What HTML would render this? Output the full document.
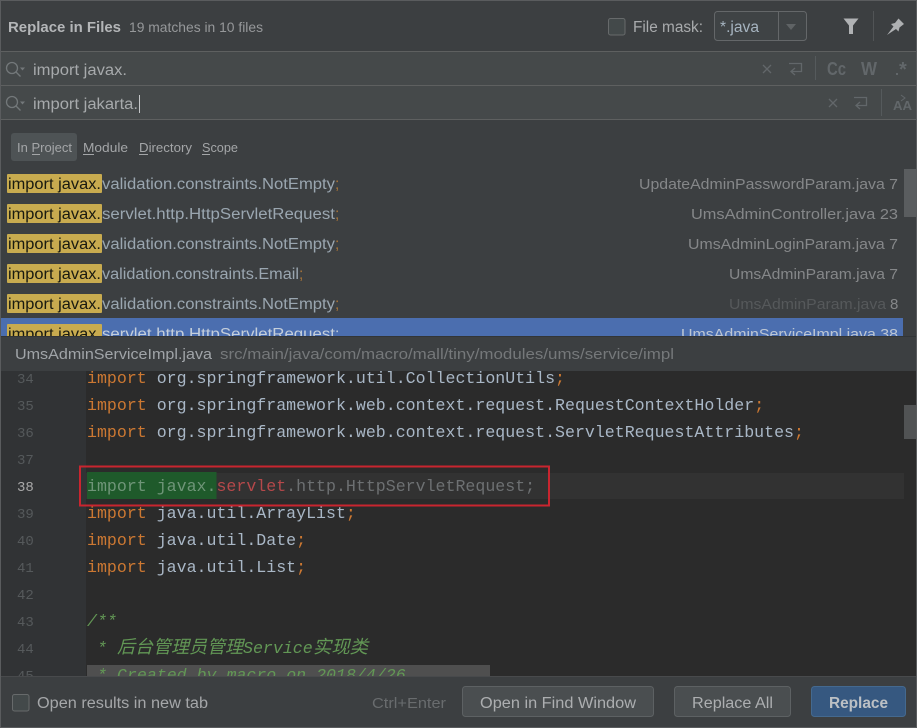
<!DOCTYPE html>
<html><head><meta charset="utf-8"><title>Replace in Files</title>
<style>
html,body{margin:0;padding:0;width:917px;height:728px;overflow:hidden;background:#3c3f41}
svg{display:block}
text{font-family:"Liberation Sans","Noto Sans CJK SC",sans-serif}
.m text{font-family:"Liberation Mono","Noto Sans CJK SC",monospace;font-size:16.6px;white-space:pre}
.n text{font-family:"Liberation Mono",monospace;font-size:14px;fill:#55595b}
.l{font-size:15.5px}
.f{font-size:15px;fill:#858789}
</style></head><body>
<svg width="917" height="728" viewBox="0 0 917 728" xmlns="http://www.w3.org/2000/svg">
<rect width="917" height="728" fill="#3c3f41"/>
<!-- search fields -->
<rect x="0" y="52" width="917" height="67" fill="#45494a"/>
<rect x="0" y="51" width="917" height="1" fill="#5e6060"/>
<rect x="0" y="85" width="917" height="1" fill="#5e6060"/>
<rect x="0" y="119" width="917" height="1" fill="#5e6060"/>
<!-- header -->
<text x="8" y="32" font-size="15" font-weight="bold" fill="#b4b6b8" textLength="113" lengthAdjust="spacingAndGlyphs">Replace in Files</text>
<text x="129" y="32" font-size="14" fill="#96989a" textLength="134" lengthAdjust="spacingAndGlyphs">19 matches in 10 files</text>
<rect x="608.5" y="18.5" width="16.5" height="16.5" rx="2" fill="#43494a" stroke="#676a6b"/>
<text x="633" y="32" font-size="15.5" fill="#a9abad" textLength="70" lengthAdjust="spacingAndGlyphs">File mask:</text>
<rect x="714.5" y="11.5" width="92" height="29" rx="3" fill="#3f4345" stroke="#646769"/>
<rect x="778" y="12" width="1" height="28" fill="#646769"/>
<text x="720" y="32" font-size="15.5" fill="#a6b4c0" textLength="39" lengthAdjust="spacingAndGlyphs">*.java</text>
<path d="M786 24h10l-5 6z" fill="#5f6365"/>
<path d="M843.500 18.500h15l-5.500 7v8.500h-4v-8.500z" fill="#b0b2b4"/>
<rect x="873" y="11" width="1" height="30" fill="#515456"/>
<path d="M887 35l6.500-8.500-2.500-2.500 4-1 3.500-4.500 5.500 5.500-4.500 3.500-1 4-2.500-2.500z" fill="#aeb0b2"/>
<!-- search icons -->
<g fill="none" stroke="#73787a" stroke-width="1.300">
<circle cx="12" cy="68" r="5.500"/><path d="M16 72l4.500 4.500"/>
<circle cx="12" cy="102" r="5.500"/><path d="M16 106l4.500 4.500"/>
</g>
<path d="M20 67.500h5l-2.500 3zM20 101.500h5l-2.500 3z" fill="#73787a"/>
<text x="33" y="75" font-size="15.500" fill="#a7aaac" textLength="94" lengthAdjust="spacingAndGlyphs">import javax.</text>
<text x="33" y="109" font-size="15.500" fill="#a7aaac" textLength="105" lengthAdjust="spacingAndGlyphs">import jakarta.</text>
<rect x="139" y="95" width="1" height="18" fill="#c4c6c8"/>
<!-- right search icons -->
<g fill="none" stroke="#62676a" stroke-width="1.300">
<path d="M763 65l8 8M771 65l-8 8M829 99l8 8M837 99l-8 8"/>
<path d="M789 63.500h12.500v8h-10M795 68l-4 3.500 4 3.500"/>
<path d="M854 97.500h12.500v8h-10M860 102l-4 3.500 4 3.500"/>
</g>
<rect x="815" y="56" width="1" height="24" fill="#555a5c"/>
<rect x="881" y="89" width="1" height="27" fill="#555a5c"/>
<text x="827" y="75" font-size="18" font-weight="bold" fill="#62676a" textLength="19" lengthAdjust="spacingAndGlyphs">Cc</text>
<text x="861" y="75" font-size="18" font-weight="bold" fill="#62676a" textLength="16" lengthAdjust="spacingAndGlyphs">W</text>
<text x="899" y="76" font-size="20" font-weight="bold" fill="#62676a">*</text>
<rect x="896" y="73" width="2" height="2" fill="#62676a"/>
<text x="893" y="110" font-size="13" font-weight="bold" fill="#62676a" textLength="19" lengthAdjust="spacingAndGlyphs">AA</text>
<path d="M901 95l4 3-4 3" fill="none" stroke="#62676a"/>
<!-- scope tabs -->
<rect x="11" y="133" width="66" height="28" rx="3" fill="#4e5355"/>
<g font-size="13" fill="#a4a6a8">
<text x="17" y="152" textLength="55" lengthAdjust="spacingAndGlyphs">In Project</text>
<text x="83" y="152" textLength="45" lengthAdjust="spacingAndGlyphs">Module</text>
<text x="139" y="152" textLength="53" lengthAdjust="spacingAndGlyphs">Directory</text>
<text x="202" y="152" textLength="36" lengthAdjust="spacingAndGlyphs">Scope</text>
</g>
<g fill="#a4a6a8"><rect x="32" y="154" width="8" height="1"/><rect x="83" y="154" width="11" height="1"/><rect x="139" y="154" width="9" height="1"/><rect x="202" y="154" width="8" height="1"/></g>
<!-- results -->
<rect x="0" y="318" width="903" height="19" fill="#4b6eaf"/>
<g fill="#c8ab4f">
<rect x="7" y="174" width="95" height="19" rx="1"/><rect x="7" y="204" width="95" height="19" rx="1"/><rect x="7" y="234" width="95" height="19" rx="1"/><rect x="7" y="264" width="95" height="19" rx="1"/><rect x="7" y="294" width="95" height="19" rx="1"/><rect x="7" y="324" width="95" height="19" rx="1"/>
</g>
<g class="l" fill="#191a10">
<text x="8" y="189" textLength="93" lengthAdjust="spacingAndGlyphs">import javax.</text>
<text x="8" y="219" textLength="93" lengthAdjust="spacingAndGlyphs">import javax.</text>
<text x="8" y="249" textLength="93" lengthAdjust="spacingAndGlyphs">import javax.</text>
<text x="8" y="279" textLength="93" lengthAdjust="spacingAndGlyphs">import javax.</text>
<text x="8" y="309" textLength="93" lengthAdjust="spacingAndGlyphs">import javax.</text>
<text x="8" y="339" textLength="93" lengthAdjust="spacingAndGlyphs">import javax.</text>
</g>
<g class="l" fill="#9aa6b0">
<text x="102" y="189" textLength="233" lengthAdjust="spacingAndGlyphs">validation.constraints.NotEmpty</text>
<text x="102" y="219" textLength="233" lengthAdjust="spacingAndGlyphs">servlet.http.HttpServletRequest</text>
<text x="102" y="249" textLength="233" lengthAdjust="spacingAndGlyphs">validation.constraints.NotEmpty</text>
<text x="102" y="279" textLength="197" lengthAdjust="spacingAndGlyphs">validation.constraints.Email</text>
<text x="102" y="309" textLength="233" lengthAdjust="spacingAndGlyphs">validation.constraints.NotEmpty</text>
<text x="102" y="339" textLength="233" lengthAdjust="spacingAndGlyphs" fill="#c5cfdb">servlet.http.HttpServletRequest</text>
</g>
<g class="l" fill="#a8743a">
<text x="335" y="189">;</text><text x="335" y="219">;</text><text x="335" y="249">;</text><text x="299" y="279">;</text><text x="335" y="309">;</text><text x="335" y="339" fill="#c5cfdb">;</text>
</g>
<g class="f">
<text x="639" y="189" textLength="259" lengthAdjust="spacingAndGlyphs">UpdateAdminPasswordParam.java 7</text>
<text x="691" y="219" textLength="207" lengthAdjust="spacingAndGlyphs">UmsAdminController.java 23</text>
<text x="688" y="249" textLength="210" lengthAdjust="spacingAndGlyphs">UmsAdminLoginParam.java 7</text>
<text x="729" y="279" textLength="169" lengthAdjust="spacingAndGlyphs">UmsAdminParam.java 7</text>
<text x="729" y="309" textLength="157" lengthAdjust="spacingAndGlyphs" fill="#56595b">UmsAdminParam.java</text>
<text x="890" y="309" style="font-size:15px" fill="#858789">8</text>
<text x="681" y="339" textLength="217" lengthAdjust="spacingAndGlyphs" fill="#bcc6d4">UmsAdminServiceImpl.java 38</text>
</g>
<rect x="904" y="169" width="12" height="48" fill="#5a5d5f"/>
<!-- preview header -->
<rect x="0" y="337" width="917" height="34" fill="#3c3f41"/>
<rect x="0" y="336" width="917" height="1" fill="#323537"/>
<text x="15" y="359" font-size="15" fill="#a0a4a8" textLength="197" lengthAdjust="spacingAndGlyphs">UmsAdminServiceImpl.java</text>
<text x="220" y="359" font-size="15" fill="#75787a" textLength="454" lengthAdjust="spacingAndGlyphs">src/main/java/com/macro/mall/tiny/modules/ums/service/impl</text>
<!-- editor -->
<rect x="0" y="371" width="917" height="306" fill="#2b2b2b"/>
<rect x="0" y="371" width="86" height="306" fill="#313335"/>
<rect x="86" y="473" width="818" height="26" fill="#323232"/>
<rect x="87" y="472" width="129.500" height="27" fill="#1f5a2b"/>
<rect x="87" y="665" width="403" height="12" fill="#4f4f4f"/>
<rect x="904" y="405" width="12" height="34" fill="#515354"/>
<g class="n">
<text x="17" y="383">34</text><text x="17" y="410">35</text><text x="17" y="437">36</text><text x="17" y="464">37</text>
<text x="17" y="491" style="fill:#a9a9a9">38</text>
<text x="17" y="518">39</text><text x="17" y="545">40</text><text x="17" y="572">41</text><text x="17" y="599">42</text><text x="17" y="626">43</text><text x="17" y="653">44</text><text x="17" y="680">45</text>
</g>
<g class="m" fill="#a9b7c6">
<text x="87" y="383"><tspan fill="#cc7832">import</tspan> org.springframework.util.CollectionUtils<tspan fill="#cc7832">;</tspan></text>
<text x="87" y="410"><tspan fill="#cc7832">import</tspan> org.springframework.web.context.request.RequestContextHolder<tspan fill="#cc7832">;</tspan></text>
<text x="87" y="437"><tspan fill="#cc7832">import</tspan> org.springframework.web.context.request.ServletRequestAttributes<tspan fill="#cc7832">;</tspan></text>
<text x="87" y="491" fill="#6d7072"><tspan fill="#6f9578">import javax.</tspan><tspan fill="#b5484a">servlet</tspan>.http.HttpServletRequest;</text>
<text x="87" y="518"><tspan fill="#cc7832">import</tspan> java.util.ArrayList<tspan fill="#cc7832">;</tspan></text>
<text x="87" y="545"><tspan fill="#cc7832">import</tspan> java.util.Date<tspan fill="#cc7832">;</tspan></text>
<text x="87" y="572"><tspan fill="#cc7832">import</tspan> java.util.List<tspan fill="#cc7832">;</tspan></text>
<text x="87" y="626" fill="#629755" font-style="italic">/**</text>
<text x="97" y="653" fill="#629755" font-style="italic">*</text>
<text x="117" y="653" fill="#629755" font-style="italic" style="font-size:18px" textLength="126" lengthAdjust="spacingAndGlyphs">后台管理员管理</text>
<text x="243" y="653" fill="#629755" font-style="italic">Service</text>
<text x="313" y="653" fill="#629755" font-style="italic" style="font-size:18px" textLength="55" lengthAdjust="spacingAndGlyphs">实现类</text>
<text x="97" y="680" fill="#629755" font-style="italic">* Created by macro on 2018/4/26</text>
</g>
<!-- red annotation -->
<rect x="80" y="466.500" width="469" height="39" fill="none" stroke="#c9252f" stroke-width="2"/>
<!-- footer -->
<rect x="0" y="676" width="917" height="52" fill="#3c3f41"/>
<rect x="0" y="676" width="917" height="1" fill="#484a4c"/>
<rect x="12.500" y="694.500" width="16.500" height="16.500" rx="2" fill="#43494a" stroke="#676a6b"/>
<text x="37" y="708" font-size="15.500" fill="#a5a7a9" textLength="171" lengthAdjust="spacingAndGlyphs">Open results in new tab</text>
<text x="372" y="708" font-size="15" fill="#696c6e" textLength="74" lengthAdjust="spacingAndGlyphs">Ctrl+Enter</text>
<rect x="462.500" y="686.500" width="191" height="30" rx="3" fill="#4a4e50" stroke="#5d6163"/>
<text x="480" y="708" font-size="15.500" fill="#acaeb0" textLength="156" lengthAdjust="spacingAndGlyphs">Open in Find Window</text>
<rect x="674.500" y="686.500" width="116" height="30" rx="3" fill="#4a4e50" stroke="#5d6163"/>
<text x="692" y="708" font-size="15.500" fill="#acaeb0" textLength="81" lengthAdjust="spacingAndGlyphs">Replace All</text>
<rect x="811.500" y="686.500" width="94" height="30" rx="3" fill="#365880" stroke="#44698f"/>
<text x="829" y="708" font-size="15.500" font-weight="bold" fill="#bcc0c4" textLength="59" lengthAdjust="spacingAndGlyphs">Replace</text>
<!-- outer border -->
<rect x="0.500" y="0.500" width="916" height="727" fill="none" stroke="#5a5c5e"/>
</svg>
</body></html>
